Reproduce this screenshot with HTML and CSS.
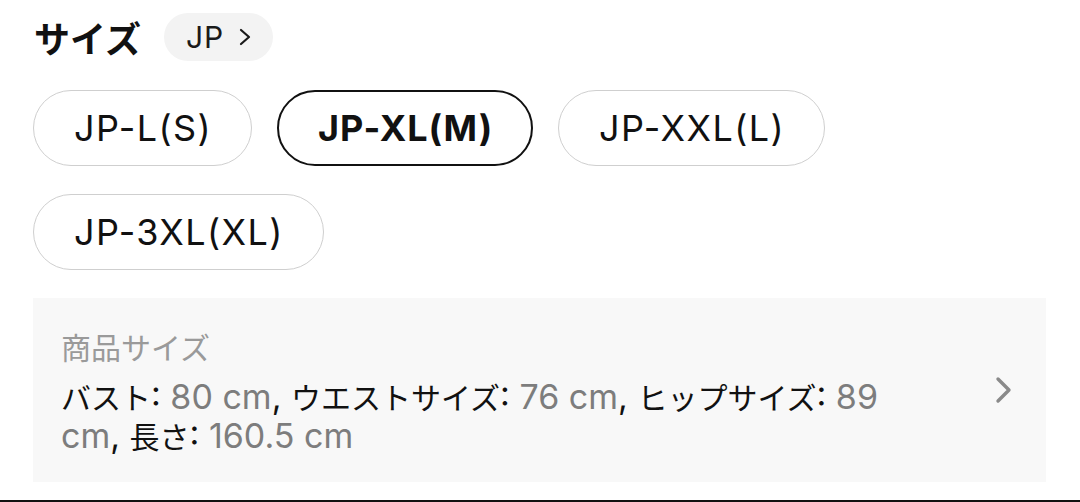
FILE: index.html
```html
<!DOCTYPE html>
<html lang="ja">
<head>
<meta charset="utf-8">
<title>サイズ</title>
<link rel="stylesheet" href="styles.css">
</head>
<body>
<div class="wrap">
  <div class="header">
    <h2 class="title">サイズ</h2>
    <button class="region">JP
      <svg class="region-chev" width="14" height="18" viewBox="0 0 14 18"><path d="M3 2 L11 9 L3 16" fill="none" stroke="#1a1a1a" stroke-width="2.2" stroke-linecap="round" stroke-linejoin="round"/></svg>
    </button>
  </div>
  <div class="sizes">
    <button class="size">JP-L(S)</button>
    <button class="size sel">JP-XL(M)</button>
    <button class="size">JP-XXL(L)</button>
    <button class="size">JP-3XL(XL)</button>
  </div>
  <div class="detail">
    <div class="detail-text">
      <div class="detail-label">商品サイズ</div>
      <div class="detail-desc"><span class="j">バスト</span>: <span class="v">80 cm</span>, <span class="j">ウエストサイズ</span>: <span class="v">76 cm</span>, <span class="j">ヒップサイズ</span>: <span class="v">89 cm</span>, <span class="j">長さ</span>: <span class="v">160.5 cm</span></div>
    </div>
    <svg class="detail-chev" width="22" height="30" viewBox="0 0 22 30"><path d="M6 4 L17 15 L6 26" fill="none" stroke="#8a8a8a" stroke-width="3.4" stroke-linecap="round" stroke-linejoin="round"/></svg>
  </div>
</div>
<div class="divider"></div>
</body>
</html>
```
FILE: styles.css
```css
* { box-sizing: border-box; }
html, body { margin: 0; padding: 0; background: #fff; }
body {
  font-family: Inter, "Liberation Sans", "Noto Sans CJK JP", sans-serif;
  color: #111;
  width: 1080px;
  height: 502px;
  overflow: hidden;
}
.wrap { padding: 13px 34px 0 33px; }
.header { display: flex; align-items: center; gap: 23px; height: 48px; }
.title {
  margin: 0 0 0 1px;
  font-family: "Noto Sans CJK JP", sans-serif;
  font-size: 36px;
  font-weight: 700;
  line-height: 48px;
}
.region {
  display: inline-flex; align-items: center; gap: 14px;
  height: 48px; padding: 0 21px 0 22px;
  border: none; border-radius: 24px;
  background: #f3f3f3; color: #1a1a1a;
  font-family: Inter, "Liberation Sans", sans-serif;
  font-size: 30px; font-weight: 400; letter-spacing: 1px;
}
.sizes { display: flex; flex-wrap: wrap; gap: 28px 25px; margin-top: 29px; }
.size {
  display: inline-flex; align-items: center; justify-content: center;
  height: 76px; padding: 0 39px 0 40px;
  border: 1px solid #cfcfcf; border-radius: 38px;
  background: #fff; color: #111;
  font-family: Inter, "Liberation Sans", sans-serif;
  font-size: 36px; font-weight: 400; letter-spacing: 1.4px;
}
.size.sel { border: 2px solid #111; padding: 0 38px 0 39px; font-weight: 700; letter-spacing: 0.9px; }
.detail {
  display: flex; align-items: center;
  margin-top: 28px; height: 184px;
  padding: 0 32px 0 28px;
  background: #f8f8f8;
}
.detail-text { flex: 1; min-width: 0; padding-right: 87px; }
.detail-label {
  color: #9a9a9a; font-size: 30px; line-height: 40px; margin-bottom: 11px;
  font-family: "Noto Sans CJK JP", sans-serif;
}
.detail-desc { font-size: 34px; line-height: 39px; color: #111; }
.j { font-family: "Noto Sans CJK JP", sans-serif; font-size: 30px; }
.v { color: #7d7d7d; }
.detail-chev { flex: none; }
.divider { margin-top: 18px; border-top: 2px solid #111; }
```
